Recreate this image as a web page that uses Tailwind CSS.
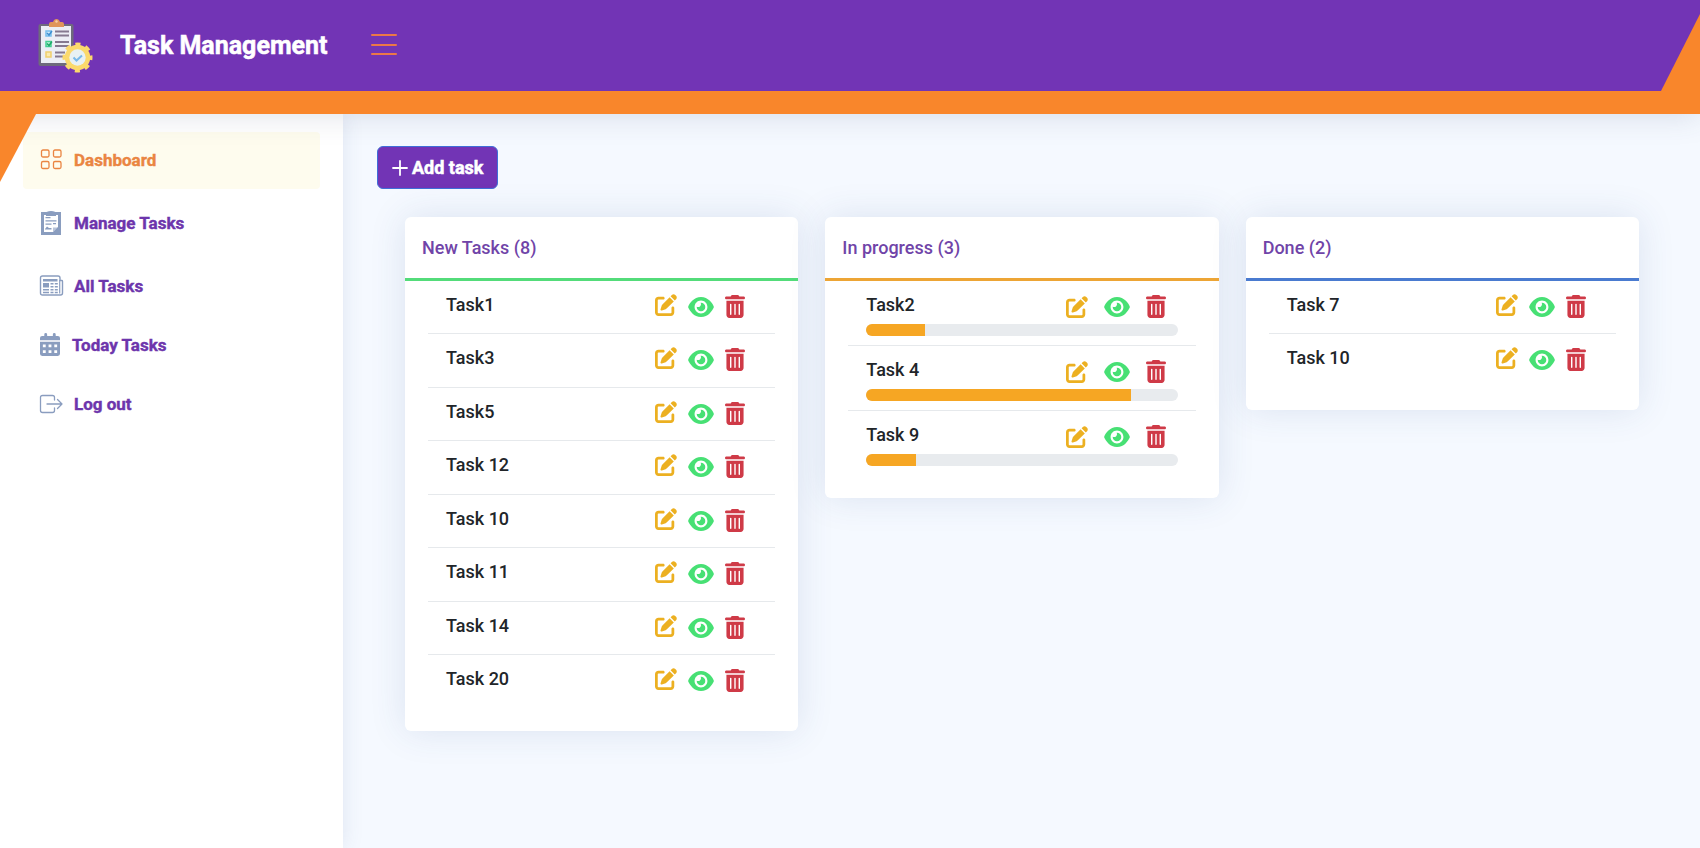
<!DOCTYPE html>
<html lang="en">
<head>
<meta charset="utf-8">
<meta name="viewport" content="width=device-width, initial-scale=1">
<title>Task Management</title>
<script src="https://cdn.jsdelivr.net/npm/@tailwindcss/browser@4"></script>
</head>
<body class="flex min-h-screen flex-col bg-[#f5f9ff] font-['Roboto',sans-serif] text-[#212529]">

<svg class="hidden" aria-hidden="true">
  <symbol id="edit" viewBox="0 0 512 512"><path d="M471.6 21.7c-21.9-21.9-57.3-21.9-79.2 0L362.3 51.7l97.9 97.9 30.1-30.1c21.900-21.900 21.900-57.300 0-79.200L471.600 21.700zm-299.200 220c-6.100 6.100-10.800 13.600-13.500 21.900l-29.600 88.800c-2.900 8.600-.6 18.100 5.800 24.600s15.900 8.700 24.600 5.800l88.800-29.600c8.200-2.700 15.700-7.400 21.900-13.500L437.700 172.300 339.700 74.300 172.400 241.700zM80 64C36 64 0 100 0 144V432c0 44 36 80 80 80H368c44 0 80-36 80-80V320c0-17.700-14.300-32-32-32s-32 14.300-32 32v112c0 8.800-7.200 16-16 16H80c-8.800 0-16-7.200-16-16V144c0-8.800 7.200-16 16-16h112c17.700 0 32-14.300 32-32s-14.300-32-32-32H80z"/></symbol>
  <symbol id="eye" viewBox="0 32 576 448"><path d="M279.6 160.4C282.4 160.1 285.2 160 288 160C341 160 384 202.1 384 256C384 309 341 352 288 352C234.1 352 192 309 192 256C192 253.2 192.1 250.4 192.4 247.6C201.7 252.1 212.5 256 224 256C259.3 256 288 227.3 288 192C288 180.5 284.1 169.7 279.6 160.4zM480.6 112.6C527.4 156 558.7 207.1 573.5 243.7C576.8 251.6 576.8 260.4 573.5 268.3C558.7 304 527.4 355.1 480.6 399.4C433.5 443.2 368.8 480 288 480C207.2 480 142.5 443.2 95.42 399.4C48.62 355.1 17.34 304 2.461 268.3C-.8205 260.4-.8205 251.6 2.461 243.7C17.34 207.1 48.62 156 95.42 112.6C142.5 68.84 207.2 32 288 32C368.8 32 433.5 68.84 480.6 112.6zM288 112C208.5 112 144 176.5 144 256C144 335.5 208.5 400 288 400C367.5 400 432 335.5 432 256C432 176.5 367.5 112 288 112z"/></symbol>
  <symbol id="trash" viewBox="0 0 448 512"><path fill-rule="evenodd" d="M135.2 17.700C140.600 6.800 151.700 0 163.800 0H284.200C296.300 0 307.400 6.800 312.800 17.700L320 32H416C433.700 32 448 46.300 448 64S433.700 96 416 96H32C14.300 96 0 81.700 0 64S14.300 32 32 32H128zM32 128H416V448C416 483.300 387.300 512 352 512H96C60.700 512 32 483.300 32 448zM112 208V432a16 16 0 0 0 32 0V208a16 16 0 0 0-32 0zM208 208V432a16 16 0 0 0 32 0V208a16 16 0 0 0-32 0zM304 208V432a16 16 0 0 0 32 0V208a16 16 0 0 0-32 0z"/></symbol>
</svg>

<header class="relative z-20 border-b-[23px] border-[#f9862b] bg-[#7234b5] shadow-[0_0_30px_rgba(60,70,110,0.18)]">
  <div class="flex h-[91px] items-center pl-[38px]">
    <svg class="h-[54px] w-[55px]" viewBox="0 0 55 54" aria-hidden="true">
      <rect x="0.500" y="5" width="35" height="42" rx="2" fill="#6e6a7c"/>
      <rect x="3" y="7" width="30" height="37" fill="#eceef5"/>
      <path d="M11 8V5q0-2 2-2h2q1-3 3.500-3T22 3h2q2 0 2 2v3z" fill="#e0955a"/>
      <circle cx="18.500" cy="2.500" r="1.200" fill="#f6d0a8"/>
      <g fill="none" stroke-width="1.500">
        <path d="M8 12h5v5H8z" stroke="#76bdec" fill="#cfe9fa"/><path d="M9 14l2 2 3-4" stroke="#3f8fd0"/>
        <path d="M8 22.500h5v5H8z" stroke="#45cf92" fill="#b8f0d5"/><path d="M9 24.500l2 2 3-4" stroke="#1faa6a"/>
        <path d="M8 33h5v5H8z" stroke="#f0d06e" fill="#faeab0"/>
        <path d="M17 12.500h14M17 16.500h14M17 23h14M17 27h14M17 33.500h10M17 37.500h8" stroke="#85798f" stroke-width="1.800"/>
      </g>
      <circle cx="39.500" cy="38.500" r="12.700" fill="#fbd96c"/>
      <circle cx="39.500" cy="38.500" r="13" fill="none" stroke="#fbd96c" stroke-width="4" stroke-dasharray="5 5.210" stroke-dashoffset="2.500"/>
      <circle cx="39.500" cy="38.500" r="8.200" fill="#e8f1f4"/>
      <path d="M35.500 38.500l3 3 5.500-5" fill="none" stroke="#79b9ea" stroke-width="2"/>
    </svg>
    <h1 class="ml-[27px] text-[25px] leading-8 font-bold text-white [-webkit-text-stroke:0.5px_currentColor]">Task Management</h1>
    <button type="button" aria-label="Toggle menu" class="ml-[43px] cursor-pointer pb-[2px]">
      <svg class="h-[22px] w-[26px] text-[#ec7847]" viewBox="0 0 26 22" fill="none" stroke="currentColor" stroke-width="2" stroke-linecap="round" aria-hidden="true"><path d="M1 1h24M1 11h24M1 20h24"/></svg>
    </button>
  </div>
  <svg class="absolute right-0 bottom-0 h-[77px] w-[39px] text-[#f9862b]" viewBox="0 0 39 77" fill="currentColor" aria-hidden="true"><path d="M0 77L39 0v77z"/></svg>
  <svg class="absolute top-[114px] left-0 h-[68px] w-[36px] text-[#f9862b]" viewBox="0 0 36 68" fill="currentColor" aria-hidden="true"><path d="M0 0h36L0 68z"/></svg>
</header>

<div class="flex flex-1">
  <aside class="z-10 w-[343px] shrink-0 bg-white pt-[18px] pr-[23px] pl-[23px] shadow-[0_0_20px_rgba(60,80,140,0.12)]">
    <nav class="flex flex-col text-[17px] leading-6 font-bold text-[#6d35ac] [-webkit-text-stroke:0.4px_currentColor]">
      <a href="#" aria-current="page" class="flex h-[57px] items-center gap-3 rounded bg-[#fefcee] pb-[2px] pl-[17px] text-[#ea8542]">
        <svg class="h-[21px] w-[22px]" viewBox="0 0 22 21" fill="none" stroke="currentColor" stroke-width="1.300" aria-hidden="true"><rect x="1.500" y="1" width="7.500" height="7" rx="1.500"/><rect x="13.500" y="1" width="7.500" height="7" rx="1.500"/><rect x="1.500" y="12.500" width="7.500" height="7" rx="1.500"/><rect x="13.500" y="12.500" width="7.500" height="7" rx="1.500"/></svg>
        Dashboard
      </a>
      <a href="#" class="mt-[6px] flex h-[57px] items-center gap-3 pb-[2px] pl-[17px]">
        <svg class="h-6 w-[22px]" viewBox="0 0 22 24" fill="#8a9dbf" aria-hidden="true"><path fill-rule="evenodd" d="M1 1h5.500Q11-1 15.500 1H21v23H1zM4 4v17h9l5-5V4h-2v1H6V4z"/><path d="M5.500 6h5v1.300h-5zM5.500 9.300h11v1.300h-11zM5.500 12.500h6v1.300h-6zM13 12h3v1.300h-3zM5 18l2-2.500 2 1.500 2.500 0v1.500H5z"/><path d="M13 21v-4.500h5z" opacity=".6"/></svg>
        Manage Tasks
      </a>
      <a href="#" class="mt-[6px] flex h-[57px] items-center gap-3 pb-[2px] pl-[17px]">
        <svg class="h-[21px] w-[22px] overflow-visible" viewBox="0 0 22 21" fill="#8a9dbf" aria-hidden="true"><path d="M20 5.500h1.800q.7 0 .7.700V18q0 2-2 2H2.500Q.5 20 .5 18V3Q.5 1 2.500 1H18q2 0 2 2z" fill="none" stroke="#8a9dbf" stroke-width="1.400"/><path d="M19.700 5v13.500" stroke="#8a9dbf" stroke-width="1.200"/><path d="M3 4h14.500v2.500H3zM3 8h6v4.500H3zM10.500 8h3v1.600h-3zM14.800 8h3v1.600h-3zM10.500 11h3v1.600h-3zM14.800 11h3v1.600h-3zM3 14h6v1.400H3zM10.500 14h3v1.400h-3zM14.800 14h3v1.400h-3zM3 16.800h6v1.400H3zM10.500 16.800h3v1.400h-3zM14.800 16.800h3v1.400h-3z"/></svg>
        All Tasks
      </a>
      <a href="#" class="mt-[2px] flex h-[57px] items-center gap-3 pb-[2px] pl-[17px]">
        <svg class="h-[23px] w-5" viewBox="0 0 448 512" fill="#8a9dbf" aria-hidden="true"><path fill-rule="evenodd" d="M96 32a32 32 0 0 1 64 0v32h128V32a32 32 0 0 1 64 0v32h48q48 0 48 48v48H0v-48q0-48 48-48h48zM0 192h448v272q0 48-48 48H48q-48 0-48-48zM64 256v64h64v-64zM192 256v64h64v-64zM320 256v64h64v-64zM64 384v64h64v-64zM192 384v64h64v-64zM320 384v64h64v-64z"/></svg>
        Today Tasks
      </a>
      <a href="#" class="mt-[2px] flex h-[57px] items-center gap-3 pb-[2px] pl-[17px]">
        <svg class="h-[18px] w-[22px] overflow-visible" viewBox="0 0 22 18" fill="none" stroke="#8a9dbf" stroke-width="1.300" stroke-linecap="round" stroke-linejoin="round" aria-hidden="true"><path d="M14.500 5V2.500q0-2-2-2h-10q-2 0-2 2v13q0 2 2 2h10q2 0 2-2V13M7 9h15M17.500 4.500L22 9l-4.500 4.500"/></svg>
        Log out
      </a>
    </nav>
  </aside>

  <main class="min-w-0 flex-1 pt-8 pr-[61px] pb-8 pl-[34px]">
    <button type="button" class="flex h-[43px] cursor-pointer items-center gap-1 rounded-md border border-[#3f6fd8] bg-[#7234b5] px-[14px] text-[18px] leading-6 font-bold text-white [-webkit-text-stroke:0.5px_currentColor]">
      <svg class="h-4 w-4" viewBox="0 0 16 16" stroke="currentColor" stroke-width="1.800" stroke-linecap="round" aria-hidden="true"><path d="M8 1v14M1 8h14"/></svg>
      Add task
    </button>
    <div id="board" class="mt-7 ml-7 grid grid-cols-3 items-start gap-[27px]"></div>
  </main>
</div>

<script>
  const columns = [
    { title: 'New Tasks', line: 'border-[#53dc7a]', tasks: [['Task1'], ['Task3'], ['Task5'], ['Task 12'], ['Task 10'], ['Task 11'], ['Task 14'], ['Task 20']] },
    { title: 'In progress', line: 'border-[#eda535]', tasks: [['Task2', 19], ['Task 4', 85], ['Task 9', 16]] },
    { title: 'Done', line: 'border-[#4a7bd0]', tasks: [['Task 7'], ['Task 10']] },
  ];

  const actions = (name, value) => `
    <div class="flex items-center pt-[2px] pr-3 ${value ? 'gap-4' : 'gap-[11px]'}">
      <button type="button" aria-label="Edit ${name}" class="cursor-pointer text-[#ecb021] ${value ? '' : '-mt-1'}"><svg class="h-[22px] w-[22px]" fill="currentColor"><use href="#edit"/></svg></button>
      <button type="button" aria-label="View ${name}" class="cursor-pointer text-[#47e074]"><svg class="h-5 w-[26px]" fill="currentColor"><use href="#eye"/></svg></button>
      <button type="button" aria-label="Delete ${name}" class="cursor-pointer text-[#cf3a47]"><svg class="h-[23px] w-5" fill="currentColor"><use href="#trash"/></svg></button>
    </div>`;

  const bar = (name, value) => `
    <div role="progressbar" aria-label="${name}" aria-valuenow="${value}" aria-valuemin="0" aria-valuemax="100" class="mt-[6px] h-3 overflow-hidden rounded-full bg-[#e8ebee]">
      <div class="h-full bg-[#f6a623]" style="width:${value}%"></div>
    </div>`;

  const row = ([name, value]) => `
    <li class="border-b border-[#e6e9ec] px-[18px] pt-3 last:border-transparent ${value ? 'h-[65px]' : 'odd:h-[53px] even:h-[54px]'}">
      <div class="flex items-start justify-between"><span class="leading-6">${name}</span>${actions(name, value)}</div>
      ${value ? bar(name, value) : ''}
    </li>`;

  document.getElementById('board').innerHTML = columns.map(c => `
    <section class="rounded-md bg-white pb-[22px] text-[18px] font-medium shadow-[0_0_36px_rgba(50,80,140,0.13)]">
      <h2 class="border-b-[3px] px-[17px] pt-[19px] pb-[18px] leading-6 font-medium text-[#7044a8] ${c.line}">${c.title} (${c.tasks.length})</h2>
      <ul class="mx-[23px]">${c.tasks.map(row).join('')}</ul>
    </section>`).join('');
</script>
</body>
</html>
